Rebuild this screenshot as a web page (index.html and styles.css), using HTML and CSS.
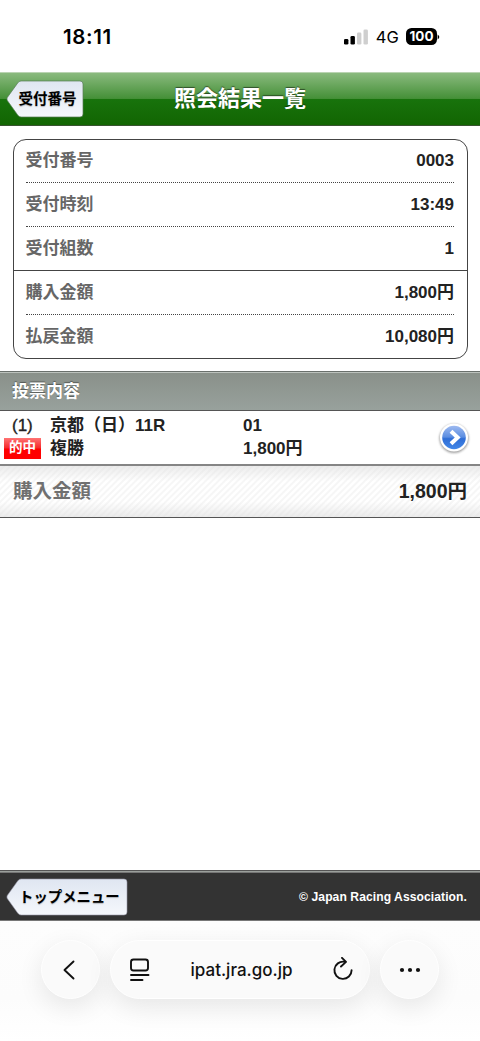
FILE: index.html
```html
<!DOCTYPE html>
<html lang="ja">
<head>
<meta charset="utf-8">
<title>照会結果一覧</title>
<link rel="stylesheet" href="styles.css">
</head>
<body>
<div class="screen">
  <div class="status">
    <span class="clock">18:11</span>
    <div class="indicators">
      <svg class="signal" width="24" height="16" viewBox="0 0 24 16"><rect x="0" y="10" width="4.4" height="5.5" rx="1.3"/><rect x="6.5" y="7" width="4.4" height="8.5" rx="1.3"/><g fill="#cfcfcf"><rect x="13" y="3.5" width="4.4" height="12" rx="1.3"/><rect x="19.5" y="0.5" width="4.4" height="15" rx="1.3"/></g></svg>
      <span class="network">4G</span>
      <span class="battery">100</span>
      <svg width="3" height="6" viewBox="0 0 3 6"><path d="M.6 .6 Q4 3 .6 5.4Z"/></svg>
    </div>
  </div>
  <header class="header">
    <a class="back">
      <svg class="tag" width="78" height="38" viewBox="0 0 78 38"><defs><linearGradient id="tagFill" x2="0" y2="1"><stop offset="0" stop-color="#dfe6f1"/><stop offset="1" stop-color="#f5f8fc"/></linearGradient></defs><path d="M15 1H74Q77 1 77 4V34Q77 37 74 37H15Q13 37 11.7 35L1.3 20.5Q.5 19 1.3 17.5L11.7 3Q13 1 15 1Z" fill="url(#tagFill)" stroke="#567b54" stroke-width=".7"/></svg>
      <span>受付番号</span>
    </a>
    <h1>照会結果一覧</h1>
  </header>
  <main class="main">
    <section class="card">
      <dl class="group">
        <div class="item"><dt>受付番号</dt><dd>0003</dd></div>
        <div class="item"><dt>受付時刻</dt><dd>13:49</dd></div>
        <div class="item"><dt>受付組数</dt><dd>1</dd></div>
      </dl>
      <dl class="group">
        <div class="item"><dt>購入金額</dt><dd>1,800円</dd></div>
        <div class="item"><dt>払戻金額</dt><dd>10,080円</dd></div>
      </dl>
    </section>
    <h2 class="section-title">投票内容</h2>
    <a class="bet">
      <div class="bet-index"><span class="number">(1)</span><span class="hit">的中</span></div>
      <div class="bet-race"><span>京都（日）11R</span><span>複勝</span></div>
      <div class="bet-detail"><span>01</span><span>1,800円</span></div>
      <svg class="arrow" width="34" height="34" viewBox="0 0 34 34"><defs><linearGradient id="ball" x2="0" y2="1"><stop offset="0" stop-color="#9ebaf0"/><stop offset=".48" stop-color="#5b8de1"/><stop offset=".55" stop-color="#2f6dd5"/><stop offset="1" stop-color="#4388e8"/></linearGradient><filter id="soft" x="-20%" y="-20%" width="140%" height="140%"><feGaussianBlur stdDeviation="1"/></filter></defs><circle cx="17" cy="17.5" r="14.6" fill="#777" opacity=".7" filter="url(#soft)"/><circle cx="17" cy="16.5" r="14" fill="#fff"/><circle cx="17" cy="16.5" r="11.8" fill="url(#ball)"/><path d="M14 10.2L20.7 16.5L14 22.8" fill="none" stroke="#fff" stroke-width="4"/></svg>
    </a>
    <div class="total"><span class="total-label">購入金額</span><span>1,800円</span></div>
  </main>
  <footer class="footer">
    <a class="back">
      <svg class="tag" width="122" height="38" viewBox="0 0 122 38"><path d="M15 1H118Q121 1 121 4V34Q121 37 118 37H15Q13 37 11.7 35L1.3 20.5Q.5 19 1.3 17.5L11.7 3Q13 1 15 1Z" fill="url(#tagFill)" stroke="#99a" stroke-width=".6"/></svg>
      <span>トップメニュー</span>
    </a>
    <small>© Japan Racing Association.</small>
  </footer>
  <nav class="browser">
    <button class="pill round"><svg width="56" height="56" viewBox="0 0 56 56"><path d="M30.5 19.5L21.5 28L30.5 36.5"/></svg></button>
    <div class="pill address">
      <svg width="22" height="26" viewBox="0 0 22 26"><rect x="2" y="2.5" width="17" height="11" rx="2.5"/><path d="M2 18H19.5M2 23H13.5"/></svg>
      <span>ipat.jra.go.jp</span>
      <svg width="22" height="26" viewBox="0 0 22 26"><path d="M12.5 4.8A8.6 8.6 0 1 0 19.6 13.3"/><path d="M10 .9L14 4.9L9 9.5"/></svg>
    </div>
    <button class="pill round"><svg class="dots" width="56" height="56" viewBox="0 0 56 56"><circle cx="20" cy="28" r="2.1"/><circle cx="28" cy="28" r="2.1"/><circle cx="36" cy="28" r="2.1"/></svg></button>
  </nav>
</div>
</body>
</html>
```
FILE: styles.css
```css
* { box-sizing: border-box; }
body, h1, h2, dl, dd { margin: 0; }
body {
  background: #fff;
  color: #222;
  font: bold 17px/24px "Liberation Sans", "Noto Sans CJK JP", sans-serif;
}
.screen { display: flex; flex-direction: column; height: 1041px; overflow: hidden; }

.status {
  flex: none;
  height: 72px;
  padding: 1px 40px 0 63px;
  display: flex;
  align-items: center;
  justify-content: space-between;
  font-family: Inter, sans-serif;
  color: #000;
}
.clock { font-size: 20.5px; font-weight: 600; letter-spacing: .6px; }
.indicators { display: flex; align-items: center; }
.network { font-size: 16.5px; font-weight: 400; margin: 0 7px 0 8px; letter-spacing: .2px; }
.battery {
  width: 31px;
  height: 17px;
  border-radius: 5.5px;
  background: #000;
  color: #fff;
  font-size: 13.5px;
  line-height: 17px;
  font-weight: 700;
  text-align: center;
}

.header {
  flex: none;
  height: 54px;
  display: grid;
  grid-template-columns: 140px 1fr 140px;
  align-items: center;
  padding: 0 6px;
  border-top: 1px solid #bad4b2;
  border-bottom: 1px solid #38532f;
  background: linear-gradient(#8aba7e, #459038 49%, #18730c 50%, #126502);
}
.header h1 {
  grid-column: 2;
  color: #fff;
  font-size: 22px;
  line-height: 30px;
  text-align: center;
  white-space: nowrap;
  justify-self: center;
  text-shadow: 0 -1px 1px rgba(0, 0, 0, .5);
}
.back {
  display: grid;
  align-items: center;
  justify-self: start;
  color: #000;
  font-size: 14.5px;
}
.back > * { grid-area: 1 / 1; }
.back span { padding-left: 12.5px; text-shadow: 0 1px 1px rgba(0, 0, 0, .25); }

.main { flex: 1; }
.card {
  margin: 12.5px 12.5px 12px;
  height: 220px;
  border: 1px solid #444;
  border-radius: 13px;
}
.group { padding: 0 12.5px; }
.group + .group { border-top: 1px solid #444; }
.item {
  display: flex;
  justify-content: space-between;
  align-items: center;
  height: 44px;
}
.item + .item { border-top: 1px dotted #444; }
.group:first-child .item:first-child, .group + .group .item:first-child { height: 43px; }
.group:first-child .item:first-child { height: 42.5px; }
.item dt { color: #666; margin-left: -.5px; }
.section-title {
  height: 40px;
  padding-left: 12px;
  border-top: 1px solid #6a706c;
  border-bottom: 1px solid #555;
  background: linear-gradient(#899089, #98a19c);
  box-shadow: inset 0 1px #bcc2bd;
  color: #fff;
  font-size: 17px;
  line-height: 39px;
  text-shadow: 0 -1px 1px rgba(0, 0, 0, .4);
}
.bet {
  height: 55px;
  display: grid;
  grid-template-columns: 46px 193px 1fr 34px;
  padding: 3px 9px 0 4px;
  border-bottom: 2px solid #858585;
  line-height: 23px;
}
.bet-index, .bet-race, .bet-detail { display: flex; flex-direction: column; white-space: nowrap; }
.bet-index { align-items: flex-start; }
.number { padding-left: 8px; font-weight: 400; -webkit-text-stroke: .35px #222; }
.hit {
  width: 37px;
  height: 21px;
  margin-top: 1px;
  background: linear-gradient(#ff7373, #f5292b 48%, #f00 52%);
  color: #fff;
  font-size: 13.5px;
  line-height: 20px;
  text-align: center;
}
.arrow { margin-top: 7.5px; }
.total {
  height: 52px;
  padding: 0 13px;
  display: flex;
  align-items: center;
  justify-content: space-between;
  border-bottom: 1px solid #555;
  background:
    linear-gradient(rgba(225, 225, 225, .65), transparent 30%, transparent 70%, rgba(225, 225, 225, .65)),
    repeating-linear-gradient(135deg, #fff 0 1.5px, #f6f6f6 2.5px 3.5px, #fff 4.5px);
  font-size: 19.5px;
}
.total-label { color: #707070; }

.footer {
  flex: none;
  height: 51px;
  display: flex;
  align-items: center;
  justify-content: space-between;
  padding: 3px 13px 0 6px;
  border-top: 1px solid #555;
  border-bottom: 1px solid #777;
  background: linear-gradient(#9a9f9b 0 1px, #777 1px 2px, #333 2px);
  color: #fff;
}
.footer .back span { padding-left: 13px; font-size: 14.4px; }
.footer small { font-size: 12.1px; letter-spacing: .08px; }

.browser {
  flex: none;
  height: 120px;
  display: flex;
  justify-content: center;
  gap: 10px;
  padding-top: 19px;
  background: linear-gradient(#fdfdfd, #fcfcfc 65%, #fff);
}
.pill {
  height: 59px;
  border: 1px solid #fff;
  border-radius: 30px;
  background: #fafafa;
  box-shadow: 0 8px 26px rgba(0, 0, 0, .09);
  padding: 0;
}
.round { width: 59px; display: grid; place-items: center; }
.pill svg { fill: none; stroke: #111; stroke-width: 1.9; stroke-linecap: round; stroke-linejoin: round; }
.pill .dots { fill: #111; stroke: none; }
.address {
  width: 260px;
  display: flex;
  align-items: center;
  justify-content: space-between;
  padding: 0 15px 0 18px;
  color: #111;
  font: 500 17px/24px Inter, sans-serif;
}
```
